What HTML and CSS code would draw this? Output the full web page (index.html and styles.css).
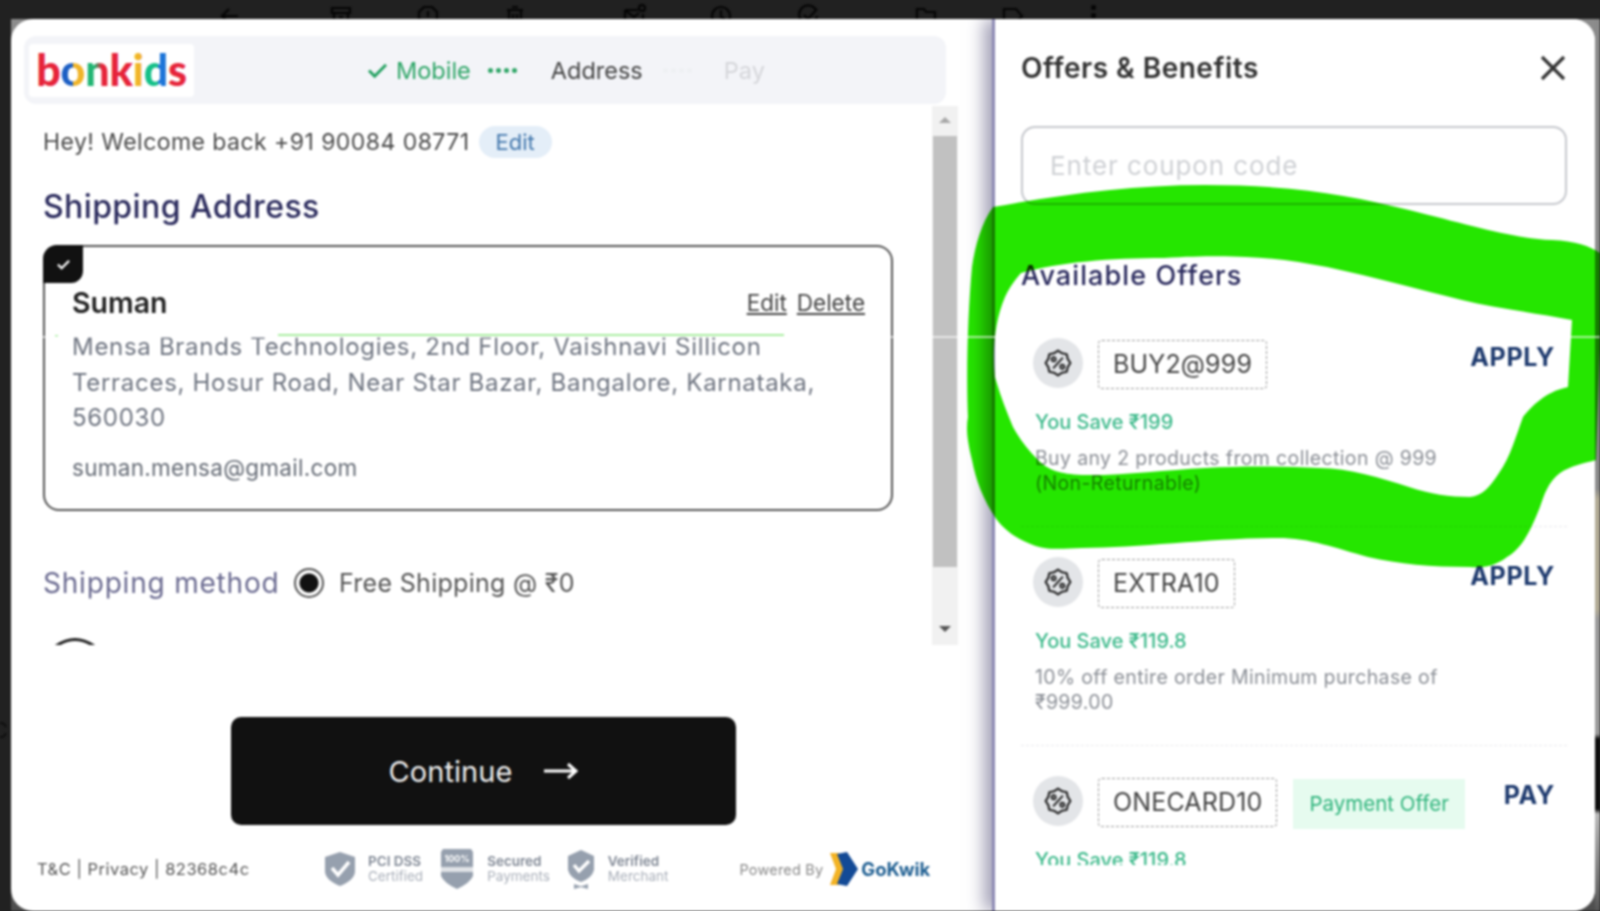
FILE: index.html
```html
<!DOCTYPE html>
<html lang="en">
<head>
<meta charset="utf-8">
<title>Checkout</title>
<link rel="stylesheet" href="styles.css">
</head>
<body>
<div class="page">
  <div class="toolbar">
    <svg class="tb" viewBox="0 0 24 24"><path d="M20 12H5M11 5l-7 7 7 7"/></svg>
    <div class="tb-group g1">
      <svg class="tb" viewBox="0 0 24 24"><path d="M3 4h18v5H3zM5 9v12h14V9M10 13h4"/></svg>
      <svg class="tb" viewBox="0 0 24 24"><path d="M8 3h8l5 5v8l-5 5H8l-5-5V8zM12 7v6M12 16v1"/></svg>
      <svg class="tb" viewBox="0 0 24 24"><path d="M4 6h16M9 3h6M6 6v15h12V6M10 10v8M14 10v8"/></svg>
    </div>
    <div class="tb-group g2">
      <svg class="tb" viewBox="0 0 24 24"><path d="M3 6h13M3 6v14h18V10M3 6l9 7 5-4"/><circle cx="20" cy="4" r="3"/></svg>
      <svg class="tb" viewBox="0 0 24 24"><circle cx="12" cy="12" r="9"/><path d="M12 6v7l4 2"/></svg>
      <svg class="tb" viewBox="0 0 24 24"><path d="M20 6A9 9 0 1 0 21 12M8 11l4 4 9-10"/></svg>
    </div>
    <div class="tb-group g3">
      <svg class="tb" viewBox="0 0 24 24"><path d="M3 5h7l2 3h9v12H3z"/></svg>
      <svg class="tb" viewBox="0 0 24 24"><path d="M3 5h12l6 7-6 7H3z"/></svg>
    </div>
    <div class="tb-dots"><i></i><i></i><i></i></div>
  </div>

  <div class="stage">
    <div class="gutter"><span class="peek">C</span></div>
    <div class="shell">
      <main class="modal">
        <section class="left">
          <header class="head">
            <div class="logo" aria-label="bonkids">
              <span class="l-b">b</span><span class="l-o">o</span><span class="l-n">n</span><span class="l-k">k</span><span class="l-i">i</span><span class="l-d">d</span><span class="l-s">s</span>
            </div>
            <nav class="steps">
              <svg class="step-check" viewBox="0 0 22 18"><path d="M2 9l6 6L20 3"/></svg>
              <span class="step done">Mobile</span>
              <span class="dots"><i></i><i></i><i></i><i></i></span>
              <span class="step cur">Address</span>
              <span class="dots off"><i></i><i></i><i></i><i></i></span>
              <span class="step todo">Pay</span>
            </nav>
          </header>

          <div class="body">
            <div class="scroll">
              <div class="welcome">
                <span>Hey! Welcome back +91 90084 08771</span>
                <span class="pill">Edit</span>
              </div>
              <h2 class="ship-title">Shipping Address</h2>
              <article class="card">
                <div class="tag"><svg viewBox="0 0 16 14"><path d="M2 7l4 4 8-8"/></svg></div>
                <div class="card-top">
                  <strong class="name">Suman</strong>
                  <div class="links"><u>Edit</u><u>Delete</u></div>
                </div>
                <p class="addr">Mensa Brands Technologies, 2nd Floor, Vaishnavi Sillicon Terraces, Hosur Road, Near Star Bazar, Bangalore, Karnataka, 560030</p>
                <p class="mail">suman.mensa@gmail.com</p>
              </article>
              <div class="method">
                <span class="m-label">Shipping method</span>
                <span class="radio"></span>
                <span class="m-val">Free Shipping @ ₹0</span>
              </div>
              <svg class="spin" viewBox="0 0 44 12"><path d="M3 10Q22 -3 41 10"/></svg>
            </div>
            <div class="sb">
              <span class="sb-up"></span>
              <span class="sb-thumb"></span>
              <span class="sb-down"></span>
            </div>
          </div>

          <button class="cta">Continue
            <svg viewBox="0 0 36 20"><path d="M1 10h32M25 3l8 7-8 7"/></svg>
          </button>

          <footer class="foot">
            <span class="terms">T&amp;C | Privacy | 82368c4c</span>
            <div class="badges">
              <div class="badge">
                <svg class="b1" viewBox="0 0 32 36"><path class="fill" d="M16 1l15 5v14q0 9-15 15Q1 29 1 20V6z"/><path class="tick" d="M8 17l6 7 11-13"/></svg>
                <div class="b-text"><b>PCI DSS</b><span>Certified</span></div>
              </div>
              <div class="badge">
                <svg class="b2" viewBox="0 0 36 42"><path class="fill" d="M4 1h28l2 3v24q-3 7-16 13Q5 35 2 28V4z"/><rect class="band" x="0" y="19" width="36" height="5"/><text class="b-pct" x="18" y="14" text-anchor="middle">100%</text></svg>
                <div class="b-text"><b>Secured</b><span>Payments</span></div>
              </div>
              <div class="badge">
                <svg class="b3" viewBox="0 0 30 40"><path class="fill" d="M15 1l13 6v14q-2 8-13 12Q4 29 2 21V7z"/><path class="tick" d="M8 16l5 6 10-10"/><path class="fill" d="M8 35l6 2 2 0 6-2v5l-7-2-7 2z"/></svg>
                <div class="b-text"><b>Verified</b><span>Merchant</span></div>
              </div>
            </div>
            <div class="powered">
              <span class="p-by">Powered By</span>
              <svg class="gk" viewBox="0 0 30 36"><path class="gk-y" d="M1 2h9l7 16-7 16H1l6-16z"/><path class="gk-b" d="M8 3l10-2 11 17-11 17-10-2 6-15z"/></svg>
              <b class="p-name">GoKwik</b>
            </div>
          </footer>
        </section>

        <aside class="panel">
          <div class="p-head">
            <h2>Offers &amp; Benefits</h2>
            <svg class="close" viewBox="0 0 26 26"><path d="M2 2l22 22M24 2L2 24"/></svg>
          </div>
          <div class="coupon">Enter coupon code</div>
          <h3 class="avail">Available Offers</h3>
          <div class="list">
            <article class="offer">
              <div class="o-top">
                <span class="o-icon"><svg viewBox="0 0 26 26"><path class="o-b" d="M24.500 13L22 16.800 21.100 21.100 16.800 22 13 24.500 9.200 22 4.900 21.100 4 16.800 1.500 13 4 9.200 4.900 4.900 9.200 4 13 1.500 16.800 4 21.100 4.900 22 9.200Z"/><path class="o-s" d="M17.500 8L8.500 18"/><circle class="o-s" cx="9" cy="9.500" r="1.800"/><circle class="o-s" cx="17" cy="16.500" r="1.800"/></svg></span>
                <span class="code">BUY2@999</span>
                <span class="act">APPLY</span>
              </div>
              <p class="save">You Save ₹199</p>
              <p class="desc">Buy any 2 products from collection @ 999 (Non-Returnable)</p>
            </article>
            <article class="offer">
              <div class="o-top">
                <span class="o-icon"><svg viewBox="0 0 26 26"><path class="o-b" d="M24.500 13L22 16.800 21.100 21.100 16.800 22 13 24.500 9.200 22 4.900 21.100 4 16.800 1.500 13 4 9.200 4.900 4.900 9.200 4 13 1.500 16.800 4 21.100 4.900 22 9.200Z"/><path class="o-s" d="M17.500 8L8.500 18"/><circle class="o-s" cx="9" cy="9.500" r="1.800"/><circle class="o-s" cx="17" cy="16.500" r="1.800"/></svg></span>
                <span class="code">EXTRA10</span>
                <span class="act">APPLY</span>
              </div>
              <p class="save">You Save ₹119.8</p>
              <p class="desc">10% off entire order Minimum purchase of ₹999.00</p>
            </article>
            <article class="offer">
              <div class="o-top">
                <span class="o-icon"><svg viewBox="0 0 26 26"><path class="o-b" d="M24.500 13L22 16.800 21.100 21.100 16.800 22 13 24.500 9.200 22 4.900 21.100 4 16.800 1.500 13 4 9.200 4.900 4.900 9.200 4 13 1.500 16.800 4 21.100 4.900 22 9.200Z"/><path class="o-s" d="M17.500 8L8.500 18"/><circle class="o-s" cx="9" cy="9.500" r="1.800"/><circle class="o-s" cx="17" cy="16.500" r="1.800"/></svg></span>
                <span class="code">ONECARD10</span>
                <span class="pay-tag">Payment Offer</span>
                <span class="act">PAY</span>
              </div>
              <p class="save">You Save ₹119.8</p>
            </article>
          </div>
        </aside>
      </main>
    </div>
    <div class="edge"></div>
  </div>

  <svg class="scribble" viewBox="0 0 1600 911">
    <path fill-rule="evenodd" d="M993 207C1060 195 1130 185 1205 185C1290 185 1350 195 1409 210C1470 225 1510 238 1552 240C1575 241 1590 246 1600 253L1600 350L1596 460C1585 463 1570 466 1560 473C1548 482 1544 495 1540 507C1530 532 1522 548 1507 557C1495 566 1485 568 1470 567C1430 567 1400 564 1368 557C1335 548 1310 538 1278 538C1210 538 1140 548 1082 548C1060 549 1045 550 1033 545C1015 538 1005 530 997 520C982 498 976 480 972 460C967 440 966 428 968 417C966 370 968 310 972 267C975 245 982 222 993 207Z
    M1021 273C1060 262 1110 258 1164 258C1200 256 1225 256 1246 257C1275 258 1300 262 1327 267C1375 277 1420 290 1462 300C1495 308 1530 312 1572 320L1568 387C1555 390 1548 394 1540 400C1532 406 1527 412 1523 417C1516 436 1510 458 1499 473C1490 487 1482 496 1470 497C1450 497 1430 494 1409 487C1380 478 1350 468 1319 468C1280 466 1240 466 1205 468C1165 470 1120 476 1082 475C1060 474 1048 470 1038 460C1028 450 1020 440 1013 427C1006 410 1000 395 995 377C992 350 995 320 1005 297C1009 288 1015 280 1021 273Z"/>
    <path class="thin" d="M278 335H784"/>
    <path class="thin" d="M55 336h3"/>
  </svg>
  <div class="seam"></div>
</div>
</body>
</html>
```

FILE: styles.css
```css
* { box-sizing: border-box; }
html, body { margin: 0; height: 911px; overflow: hidden; }
body { background: #212121; font-family: "Inter", "Noto Sans", sans-serif; color: #333; }
.page { position: relative; width: 1600px; height: 911px; filter: blur(.8px); }
p, h2, h3 { margin: 0; }

/* browser toolbar peeking above the dialog */
.toolbar { display: flex; align-items: flex-start; height: 19px; overflow: hidden; padding: 4px 0 0 218px; }
.tb { width: 24px; height: 24px; flex: none; fill: none; stroke: #050505; stroke-width: 2.200; }
.tb-group { display: flex; gap: 63px; }
.g1 { margin-left: 87px; }
.g2 { margin-left: 95px; }
.g3 { margin-left: 94px; }
.tb-dots { margin-left: 66px; display: flex; flex-direction: column; gap: 3px; padding-top: 1px; }
.tb-dots i { width: 5px; height: 5px; border-radius: 50%; background: #050505; }

.stage { display: flex; height: 892px; }
.gutter { width: 11px; flex: none; padding-top: 698px; overflow: hidden; }
.peek { font-size: 22px; line-height: 26px; color: #0e0e0e; margin-left: -8px; display: block; }
.shell { width: 1584px; flex: none; background: linear-gradient(#8c8c8c, #8c8c8c 85%, #4c4c4c); }
.edge { flex: 1; background: linear-gradient(#8a8a8a 0, #8a8a8a 470px, #b1aa94 480px, #b1aa94 590px, #9a9a9a 600px, #9a9a9a 715px, #0d0d0d 720px, #0d0d0d 790px, #b9b9b9 795px, #555 892px); }
.modal { display: flex; height: 892px; background: #fff; border-radius: 22px; overflow: hidden; }

/* left column */
.left { width: 981px; flex: none; display: flex; flex-direction: column; }
.head { display: flex; align-items: center; height: 68px; margin: 17px 46px 0 13px; background: #f3f4f8; border-radius: 12px; }
.logo { width: 165px; height: 53px; margin-left: 5px; background: #fff; border-radius: 4px; display: flex; align-items: center; justify-content: center; font-family: "Lato", sans-serif; font-weight: 900; font-size: 43px; line-height: 53px; letter-spacing: -.2px; padding-bottom: 1px; }
.l-b { color: #e6243a; }
.l-o { background: linear-gradient(90deg, #1d5fc4 50%, #f0b429 50%); -webkit-background-clip: text; background-clip: text; -webkit-text-fill-color: transparent; }
.l-n { background: linear-gradient(90deg, #22b573 40%, #e6243a 70%); -webkit-background-clip: text; background-clip: text; -webkit-text-fill-color: transparent; }
.l-k { color: #e6243a; }
.l-i { color: #f0b429; }
.l-d { background: linear-gradient(90deg, #14c088 60%, #1d75d8 60%); -webkit-background-clip: text; background-clip: text; -webkit-text-fill-color: transparent; }
.l-s { color: #e6243a; }
.steps { display: flex; align-items: center; margin-left: 173px; font-size: 23.500px; }
.step-check { width: 21px; height: 17px; fill: none; stroke: #21a05f; stroke-width: 3; margin-right: 8px; }
.step.done { color: #2da566; }
.step.cur { color: #444; }
.step.todo { color: #d5d6da; }
.dots { display: flex; gap: 3px; margin: 0 34px 0 17px; }
.dots i { width: 5px; height: 5px; border-radius: 50%; background: #2da566; }
.dots.off { margin: 0 32px 0 20px; }
.dots.off i { background: #eef0f3; }

.body { display: flex; height: 539px; margin-top: 2px; }
.scroll { flex: 1; padding: 20px 0 0 32px; overflow: hidden; }
.welcome { display: flex; align-items: center; gap: 9px; height: 32px; font-size: 23px; letter-spacing: .45px; color: #4a4a4a; }
.pill { background: #e4eef8; color: #4478ad; border-radius: 16px; height: 32px; line-height: 32px; padding: 0 17px; font-size: 22px; letter-spacing: 0; }
.ship-title { margin-top: 30px; font-size: 32px; line-height: 38px; font-weight: 500; letter-spacing: .4px; color: #2c2c5e; }
.card { position: relative; margin-top: 19px; width: 850px; height: 266px; border: 2px solid #555; border-radius: 16px; padding: 36px 26px 0 27px; }
.tag { position: absolute; left: -2px; top: -2px; width: 40px; height: 38px; background: #111; border-radius: 14px 0 12px 0; display: flex; align-items: center; justify-content: center; }
.tag svg { width: 15px; height: 13px; fill: none; stroke: #fff; stroke-width: 2.500; }
.card-top { display: flex; justify-content: space-between; align-items: center; height: 38px; }
.name { font-size: 28.500px; font-weight: 600; color: #222; }
.links { display: flex; gap: 10px; font-size: 22.500px; color: #444; }
.addr { margin-top: 8px; max-width: 770px; font-size: 24px; line-height: 35.500px; letter-spacing: .7px; color: #6e7480; }
.mail { margin-top: 17px; font-size: 22.500px; line-height: 30px; letter-spacing: .3px; color: #666c76; }
.method { display: flex; align-items: center; margin-top: 52px; height: 40px; }
.m-label { font-size: 28px; letter-spacing: .8px; color: #6a6a90; width: 251px; flex: none; white-space: nowrap; }
.radio { width: 30px; height: 30px; flex: none; border: 2px solid #555; border-radius: 50%; background: radial-gradient(circle, #111 0 9px, #fff 10px); margin-right: 15px; }
.m-val { font-size: 25px; letter-spacing: .3px; color: #555; }
.spin { display: block; width: 44px; height: 12px; margin: 33px 0 0 10px; fill: none; stroke: #222; stroke-width: 3; }
.sb { width: 26px; flex: none; margin-right: 34px; background: #f1f1f1; display: flex; flex-direction: column; align-items: center; padding-top: 11px; }
.sb-up { width: 0; height: 0; border: 6px solid transparent; border-top: 0; border-bottom: 6px solid #a8a8a8; }
.sb-thumb { width: 24px; height: 431px; background: #c1c1c1; margin: 13px 0 0; }
.sb-down { width: 0; height: 0; border: 6px solid transparent; border-bottom: 0; border-top: 6px solid #555; margin-top: 59px; }

.cta { display: flex; align-items: center; justify-content: center; gap: 30px; width: 505px; height: 108px; margin: 72px 0 0 220px; border: 0; border-radius: 10px; background: #111; color: #eee; font: 400 29px "Inter", sans-serif; letter-spacing: .1px; }
.cta svg { width: 36px; height: 20px; fill: none; stroke: #fff; stroke-width: 3; }

.foot { display: flex; align-items: center; height: 44px; margin-top: 22px; padding-left: 26px; }
.terms { width: 287px; flex: none; font-size: 16.500px; letter-spacing: .5px; color: #555; white-space: nowrap; }
.badges { display: flex; align-items: center; gap: 16px; }
.badge { display: flex; align-items: center; gap: 12px; }
.badge svg { display: block; }
.b1 { width: 32px; height: 36px; }
.b2 { width: 36px; height: 42px; }
.b3 { width: 30px; height: 40px; }
.fill { fill: #96a0ae; }
.tick { fill: none; stroke: #fff; stroke-width: 3.500; }
.band { fill: #fff; opacity: .7; }
.b-pct { font-size: 9px; font-weight: 700; fill: #fff; }
.b-text { display: flex; flex-direction: column; font-size: 13.500px; line-height: 15px; color: #aab0ba; }
.b-text b { color: #7f8794; font-weight: 600; }
.powered { display: flex; align-items: center; margin-left: 71px; }
.p-by { font-size: 14.500px; letter-spacing: .2px; color: #888; margin-right: 6px; }
.gk { width: 30px; height: 36px; margin-right: 2px; }
.gk-y { fill: #f3b324; }
.gk-b { fill: #134a96; }
.p-name { font-size: 18.500px; color: #1f5f92; }

/* offers panel */
.panel { position: relative; flex: 1; border-left: 3px solid #8d8ab4; padding: 32px 28px 0 26px; display: flex; flex-direction: column; box-shadow: -8px 0 16px rgba(70, 65, 110, .5); background: #fff; }
.p-head { display: flex; align-items: center; justify-content: space-between; height: 34px; }
.p-head h2 { font-size: 28px; font-weight: 600; letter-spacing: .5px; color: #333; }
.close { width: 26px; height: 26px; margin-right: 1px; fill: none; stroke: #333; stroke-width: 3.200; }
.coupon { margin-top: 41px; height: 79px; border: 2px solid #c6c8cd; border-radius: 14px; padding-left: 27px; line-height: 75px; font-size: 26px; letter-spacing: .9px; color: #cfd1d5; }
.avail { margin-top: 55px; font-size: 27px; line-height: 32px; font-weight: 500; letter-spacing: 1.100px; color: #2b2b5e; }
.list { margin-top: 46px; height: 527px; overflow: hidden; }
.offer { padding: 0 12px 31px 14px; margin-bottom: 30px; border-bottom: 1px dashed #e9e9ec; }
.o-top { display: flex; align-items: flex-start; height: 50px; margin-left: -4px; }
.o-icon { width: 50px; height: 50px; margin-left: 2px; border-radius: 50%; background: #e3e5e8; display: flex; align-items: center; justify-content: center; flex: none; }
.o-icon svg { width: 28px; height: 28px; }
.o-b, .o-s { fill: none; stroke: #222; stroke-width: 2; stroke-linejoin: round; }
.o-s { stroke-width: 1.800; }
.code { margin: 2px 0 0 15px; height: 49px; border: 1.500px dashed #999; border-radius: 4px; padding: 0 14px; line-height: 46px; font-size: 25px; letter-spacing: .15px; color: #444; }
.pay-tag { margin: 3px 0 0 16px; height: 50px; line-height: 50px; padding: 0 16px; background: #e6fbef; font-size: 20.500px; color: #2fb47c; }
.act { margin-left: auto; line-height: 38px; font-size: 25px; font-weight: 700; letter-spacing: .7px; color: #1e3a6e; }
.save { margin-top: 20px; line-height: 28px; font-size: 20px; font-weight: 500; color: #3bb98a; }
.desc { margin-top: 10px; max-width: 425px; line-height: 24.500px; font-size: 19.500px; letter-spacing: .36px; color: #8b8f96; }

/* marker scribble and capture seam, laid over the whole picture */
.scribble { position: absolute; left: 0; top: 0; width: 1600px; height: 911px; fill: #25e600; mix-blend-mode: multiply; pointer-events: none; }
.thin { fill: none; stroke: #a9eea0; stroke-width: 2; }
.seam { position: absolute; left: 11px; top: 336px; width: 1589px; height: 2px; background: rgba(255, 255, 255, .6); }
```
